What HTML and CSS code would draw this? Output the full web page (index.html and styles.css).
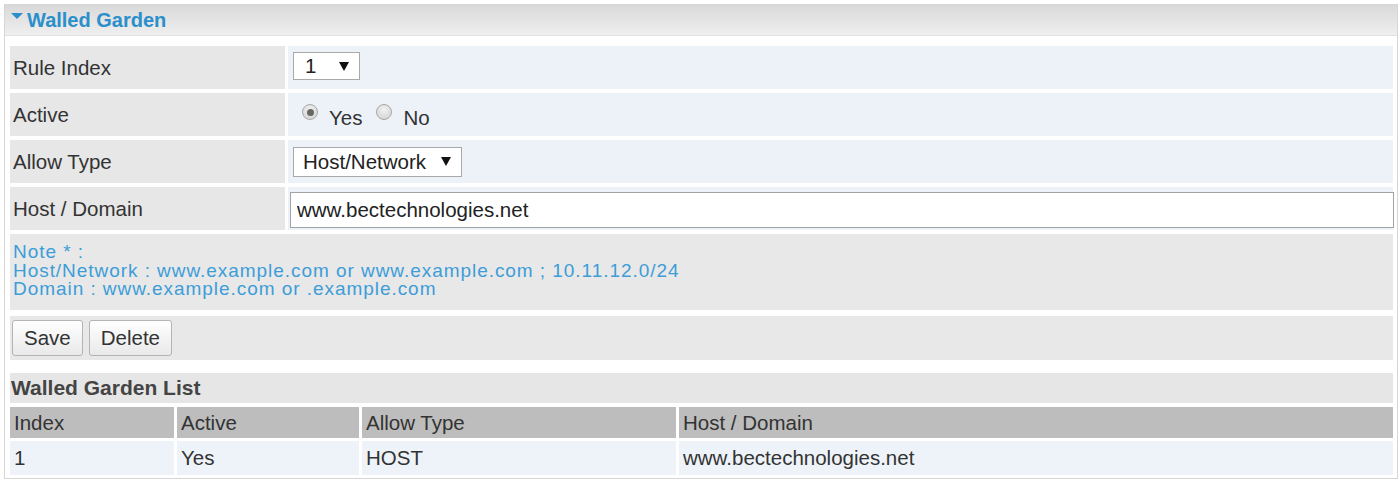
FILE: index.html
```html
<!DOCTYPE html>
<html lang="en">
<head>
<meta charset="utf-8">
<title>Walled Garden</title>
<link rel="stylesheet" href="styles.css">
</head>
<body>
<div class="panel">
  <div class="panel-head"><span class="caret"></span>Walled Garden</div>
  <div class="panel-body">
    <div class="form-grid">
      <div class="lbl">Rule Index</div>
      <div class="val">
        <div class="sel sel-index"><span class="sel-text">1</span><span class="arrow"></span></div>
      </div>

      <div class="lbl">Active</div>
      <div class="val">
        <span class="radio checked"></span><span class="radio-text">Yes</span>
        <span class="radio radio-no"></span><span class="radio-text">No</span>
      </div>

      <div class="lbl">Allow Type</div>
      <div class="val">
        <div class="sel sel-type"><span class="sel-text">Host/Network</span><span class="arrow"></span></div>
      </div>

      <div class="lbl">Host / Domain</div>
      <div class="val val-input">
        <input class="text-input" type="text" value="www.bectechnologies.net">
      </div>
    </div>

    <div class="note">
      Note * :<br>
      Host/Network : www.example.com or www.example.com ; 10.11.12.0/24<br>
      Domain : www.example.com or .example.com
    </div>

    <div class="actions">
      <button class="btn" type="button">Save</button>
      <button class="btn" type="button">Delete</button>
    </div>

    <div class="list-title">Walled Garden List</div>
    <div class="list">
      <div class="th">Index</div>
      <div class="th">Active</div>
      <div class="th">Allow Type</div>
      <div class="th">Host / Domain</div>
      <div class="td">1</div>
      <div class="td">Yes</div>
      <div class="td">HOST</div>
      <div class="td">www.bectechnologies.net</div>
    </div>
  </div>
</div>
</body>
</html>
```

FILE: styles.css
```css
* {
  box-sizing: border-box;
}

html, body {
  margin: 0;
  padding: 0;
  background: #ffffff;
}

body {
  font-family: "Liberation Sans", Arial, sans-serif;
  font-size: 20.5px;
  color: #333333;
}

.panel {
  margin: 4px 2px 0 4px;
  width: 1394px;
  border: 1px solid #d6d6d6;
  background: #ffffff;
}

.panel-head {
  height: 31px;
  display: flex;
  align-items: center;
  padding-left: 6px;
  background: linear-gradient(#d9d9d9, #efefef);
  border-bottom: 1px solid #e2e2e2;
  color: #2b8fcb;
  font-weight: bold;
  font-size: 20px;
}

.caret {
  width: 0;
  height: 0;
  border-left: 6px solid transparent;
  border-right: 6px solid transparent;
  border-top: 6px solid #2b8fcb;
  align-self: flex-start;
  margin-top: 8px;
  margin-right: 4px;
}

.panel-body {
  padding: 10px 4px 3px 5px;
}

.form-grid {
  display: grid;
  grid-template-columns: 275px 1fr;
  grid-auto-rows: 43px;
  column-gap: 3px;
  row-gap: 4px;
}

.lbl {
  background: #e7e7e7;
  display: flex;
  align-items: center;
  padding-left: 3px;
}

.val {
  background: #edf2f9;
  display: flex;
  align-items: center;
  padding-left: 5px;
}

.sel {
  display: flex;
  align-items: center;
  background: #ffffff;
  border: 1px solid #a9a9a9;
  color: #222222;
}

.sel-index {
  width: 67px;
  height: 28px;
  margin-top: -3px;
  padding-left: 11px;
}

.sel-type {
  width: 169px;
  height: 30px;
  padding-left: 9px;
}

.sel-text {
  flex: 1;
}

.arrow {
  width: 0;
  height: 0;
  border-left: 5px solid transparent;
  border-right: 5px solid transparent;
  border-top: 9px solid #111111;
  margin-right: 10px;
}

.radio {
  width: 16px;
  height: 16px;
  border-radius: 50%;
  border: 1px solid #a8a8a8;
  background: radial-gradient(circle at 50% 35%, #f2f2f2, #cfcfcf);
  margin-left: 9px;
  margin-bottom: 5px;
  display: flex;
  align-items: center;
  justify-content: center;
}

.radio.checked::after {
  content: "";
  width: 7px;
  height: 7px;
  border-radius: 50%;
  background: #666666;
}

.radio-no {
  margin-left: 14px;
}

.radio-text {
  margin-left: 11px;
  padding-top: 6px;
}

.val-input {
  padding-left: 2px;
}

.text-input {
  flex: 1;
  margin-right: -1px;
  height: 36px;
  border: 1px solid #a3a3a3;
  background: #ffffff;
  font-family: "Liberation Sans", Arial, sans-serif;
  font-size: 20.5px;
  color: #222222;
  padding: 0 6px;
  margin-top: 2px;
  outline: none;
}

.note {
  margin-top: 4px;
  height: 76px;
  background: #e8e8e8;
  padding: 9px 0 0 3px;
  font-size: 19px;
  line-height: 18.5px;
  letter-spacing: 0.95px;
  color: #3d9dd8;
}

.actions {
  margin-top: 6px;
  height: 44px;
  background: #e8e8e8;
  display: flex;
  align-items: center;
  gap: 6px;
  padding-left: 2px;
}

.btn {
  height: 36px;
  padding: 0 11px;
  border: 1px solid #b4b4b4;
  border-radius: 3px;
  background: linear-gradient(#ffffff, #e9e9e9);
  font-family: "Liberation Sans", Arial, sans-serif;
  font-size: 20.5px;
  color: #333333;
}

.list-title {
  margin-top: 13px;
  height: 30px;
  background: #e6e6e6;
  display: flex;
  align-items: center;
  padding-left: 1px;
  font-weight: bold;
  font-size: 21px;
  color: #444444;
}

.list {
  margin-top: 4px;
  display: grid;
  grid-template-columns: 164px 182px 314px 1fr;
  grid-template-rows: 31px 34px;
  column-gap: 3px;
  row-gap: 3px;
}

.th {
  background: #bdbdbd;
  display: flex;
  align-items: center;
  padding-left: 4px;
  color: #333333;
}

.td {
  background: #eef3fa;
  display: flex;
  align-items: center;
  padding-left: 4px;
  color: #333333;
}
```
